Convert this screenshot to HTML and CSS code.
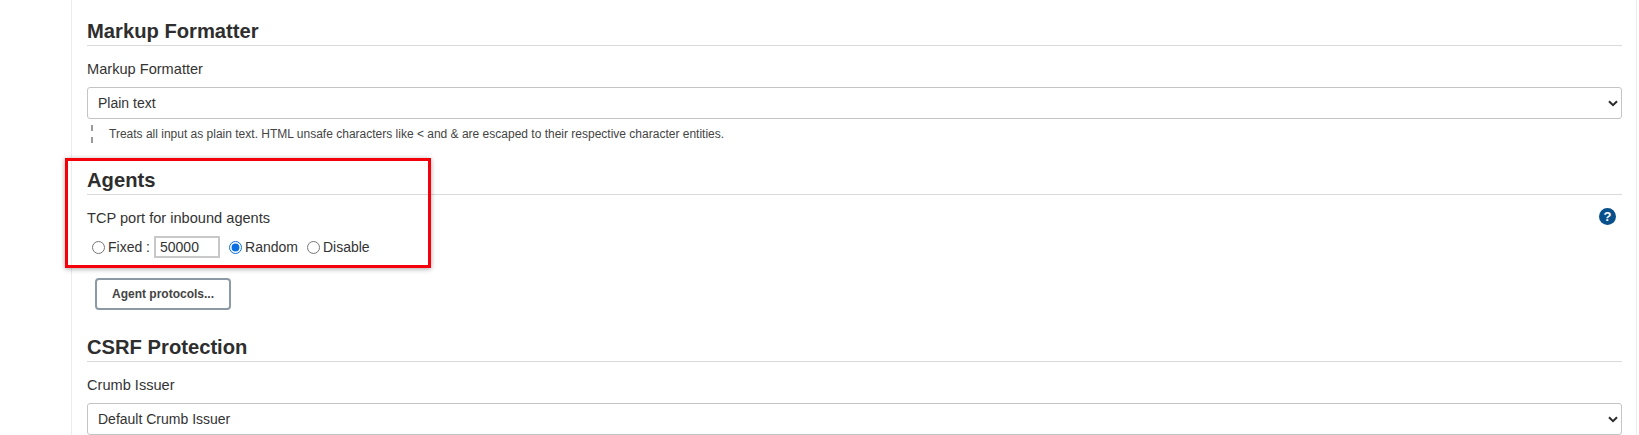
FILE: index.html
```html
<!DOCTYPE html>
<html lang="en">
<head>
<meta charset="utf-8">
<title>Configure Global Security</title>
<link rel="stylesheet" href="styles.css">
</head>
<body>
<main class="main">
  <section class="section first">
    <h2 class="heading">Markup Formatter</h2>
    <div class="label">Markup Formatter</div>
    <div class="select-wrap">
      <select class="select"><option>Plain text</option></select>
      <svg class="chevron" viewBox="0 0 10 7" width="10" height="7"><path d="M1 1.2 5 5.2 9 1.2" fill="none" stroke="#2b2b2b" stroke-width="2"/></svg>
    </div>
    <div class="help">Treats all input as plain text. HTML unsafe characters like &lt; and &amp; are escaped to their respective character entities.</div>
  </section>
  <section class="section agents">
    <h2 class="heading">Agents</h2>
    <div class="label-row">
      <div class="label">TCP port for inbound agents</div>
      <svg class="help-icon" viewBox="0 0 17 17" width="17" height="17"><circle cx="8.5" cy="8.5" r="8.5" fill="#07508c"/><text x="8.5" y="13.2" text-anchor="middle" class="help-mark">?</text></svg>
    </div>
    <div class="radios">
      <label class="radio-item"><input type="radio" name="port" class="radio"><span>Fixed :</span></label>
      <input class="port" type="text" value="50000">
      <label class="radio-item gap"><input type="radio" name="port" class="radio" checked><span>Random</span></label>
      <label class="radio-item gap2"><input type="radio" name="port" class="radio"><span>Disable</span></label>
    </div>
    <button class="button" type="button">Agent protocols...</button>
    <div class="callout"></div>
  </section>
  <section class="section csrf">
    <h2 class="heading">CSRF Protection</h2>
    <div class="label">Crumb Issuer</div>
    <div class="select-wrap">
      <select class="select"><option>Default Crumb Issuer</option></select>
      <svg class="chevron" viewBox="0 0 10 7" width="10" height="7"><path d="M1 1.2 5 5.2 9 1.2" fill="none" stroke="#2b2b2b" stroke-width="2"/></svg>
    </div>
  </section>
</main>
</body>
</html>
```
FILE: styles.css
```css
* { box-sizing: border-box; }
html, body { height: 100%; }
body {
  margin: 0;
  background: #fff;
  color: #333;
  font-family: "Liberation Sans", Arial, sans-serif;
  font-size: 13.5px;
  overflow: hidden;
}
.main {
  margin-left: 71px;
  margin-right: 2px;
  height: 435px;
  padding: 0 14px 0 15px;
  border-left: 1px solid #ececec;
  border-right: 1px solid #ececec;
}
.section { position: relative; }
.section.first { padding-top: 19px; }
.section.agents { margin-top: 23px; }
.section.csrf { margin-top: 25px; }
.heading {
  margin: 0;
  height: 27px;
  line-height: 25px;
  font-size: 20.2px;
  font-weight: 700;
  color: #2e2e2e;
  border-bottom: 1px solid #d9d9d9;
}
.label {
  margin-top: 13px;
  line-height: 20px;
  font-size: 14.6px;
  color: #333;
}
.label-row {
  display: flex;
  justify-content: space-between;
  align-items: flex-start;
}
.help-icon { margin-top: 13px; margin-right: 6px; }
.help-mark { font: 700 13px "Liberation Sans", Arial, sans-serif; fill: #fff; }
.select-wrap {
  position: relative;
  margin-top: 8px;
}
.select {
  display: block;
  width: 100%;
  height: 32px;
  padding: 0 10px;
  appearance: none;
  background: #fff;
  border: 1px solid #c4c4c4;
  border-radius: 3px;
  color: #333;
  font: 14px "Liberation Sans", Arial, sans-serif;
}
.chevron {
  position: absolute;
  right: 4px;
  top: 13px;
}
.help {
  margin-top: 6px;
  padding-left: 22px;
  height: 20px;
  line-height: 19px;
  font-size: 12px;
  color: #444;
  background: repeating-linear-gradient(#9a9a9a 0 6px, transparent 6px 12px) 4px 0 / 2px 18px no-repeat;
}
.radios {
  display: flex;
  align-items: center;
  height: 24px;
  margin-top: 7px;
  padding-left: 4px;
}
.radio-item {
  display: flex;
  align-items: center;
  font-size: 14px;
  color: #333;
}
.radio {
  width: 13px;
  height: 13px;
  margin: 0 3px 0 1px;
}
.radio:checked { accent-color: #0a6fe0; }
.port {
  width: 66px;
  height: 22px;
  margin-left: 4px;
  padding: 0 4px;
  border: 2px solid #c8c8c8;
  background: #fff;
  color: #333;
  font: 14px "Liberation Sans", Arial, sans-serif;
}
.gap { margin-left: 8px; }
.gap2 { margin-left: 8px; }
.button {
  display: block;
  width: 136px;
  height: 32px;
  margin: 19px 0 0 8px;
  background: #fff;
  border: 2px solid #8c9aa6;
  border-radius: 4px;
  color: #444;
  font: 700 12px "Liberation Sans", Arial, sans-serif;
}
.callout {
  position: absolute;
  left: -22px;
  top: -10px;
  width: 366px;
  height: 110px;
  border: 3px solid #f5000a;
  box-shadow: 0 1px 5px rgba(0, 0, 0, .35);
  pointer-events: none;
}
```
